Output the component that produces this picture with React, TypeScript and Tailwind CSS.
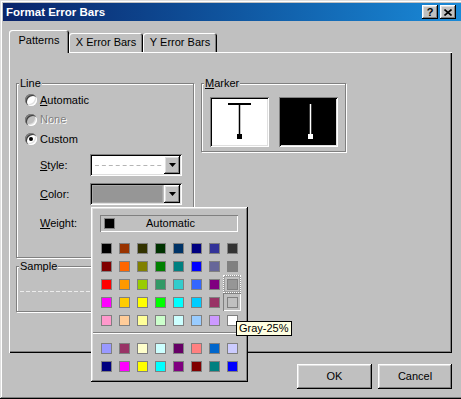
import type { ReactNode } from "react"

const raised =
  "shadow-[inset_-1px_-1px_0_0_#000,inset_1px_1px_0_0_#fff,inset_-2px_-2px_0_0_#808080,inset_2px_2px_0_0_#dfdfdf]"
const sunken =
  "shadow-[inset_1px_1px_0_0_#808080,inset_-1px_-1px_0_0_#fff,inset_2px_2px_0_0_#000,inset_-2px_-2px_0_0_#dfdfdf]"
const etched = "border border-[#808080] shadow-[inset_1px_1px_0_0_#fff,1px_1px_0_0_#fff]"

const standardColors = [
  ["#000000", "#993300", "#333300", "#003300", "#003366", "#000080", "#333399", "#333333"],
  ["#800000", "#ff6600", "#808000", "#008000", "#008080", "#0000ff", "#666699", "#808080"],
  ["#ff0000", "#ff9900", "#99cc00", "#339966", "#33cccc", "#3366ff", "#800080", "#969696"],
  ["#ff00ff", "#ffcc00", "#ffff00", "#00ff00", "#00ffff", "#00ccff", "#993366", "#c0c0c0"],
  ["#ff99cc", "#ffcc99", "#ffff99", "#ccffcc", "#ccffff", "#99ccff", "#cc99ff", "#ffffff"],
]

const chartColors = [
  ["#9999ff", "#993366", "#ffffcc", "#ccffff", "#660066", "#ff8080", "#0066cc", "#ccccff"],
  ["#000080", "#ff00ff", "#ffff00", "#00ffff", "#800080", "#800000", "#008080", "#0000ff"],
]

function Radio({ checked, disabled }: { checked?: boolean; disabled?: boolean }) {
  return (
    <span
      className={`flex items-center justify-center w-[12px] h-[12px] rounded-full shadow-[inset_1px_1px_0_0_#808080,inset_2px_2px_0_0_#404040,inset_-1px_-1px_0_0_#fff,inset_-2px_-2px_0_0_#dfdfdf] ${
        disabled ? "bg-[#c0c0c0]" : "bg-white"
      }`}
    >
      {checked && <span className="w-[4px] h-[4px] rounded-full bg-black" />}
    </span>
  )
}

function Arrow() {
  return (
    <span className={`flex items-center justify-center w-[16px] h-[18px] bg-[#c0c0c0] ${raised}`}>
      <svg width="7" height="4" viewBox="0 0 7 4">
        <polygon points="0,0 7,0 3.5,4" fill="#000" />
      </svg>
    </span>
  )
}

function Group({ label, className, children }: { label: ReactNode; className: string; children?: ReactNode }) {
  return (
    <div className={`relative ${etched} ${className}`}>
      <span className="absolute -top-[7px] left-[2px] px-[1px] bg-[#c0c0c0]">{label}</span>
      {children}
    </div>
  )
}

function Swatch({ color, frame }: { color: string; frame?: "selected" | "hover" }) {
  const frameClass =
    frame === "selected"
      ? "outline outline-1 outline-dotted outline-white -outline-offset-1 shadow-[inset_0_0_0_2px_#a0a0a0]"
      : frame === "hover"
      ? "shadow-[inset_1px_1px_0_0_#808080,inset_-1px_-1px_0_0_#fff]"
      : ""
  return (
    <div className={`flex items-center justify-center w-[18px] h-[18px] ${frameClass}`}>
      <div className="w-[11px] h-[11px] border border-[#808080]" style={{ backgroundColor: color }} />
    </div>
  )
}

function Button({ children, w }: { children: ReactNode; w: string }) {
  return (
    <div className={`flex items-center justify-center h-[25px] bg-[#c0c0c0] ${raised} ${w}`}>{children}</div>
  )
}

export default function App() {
  return (
    <div className="relative w-[461px] h-[399px] overflow-hidden bg-[#c0c0c0] pt-[3px] pl-[3px] font-['Liberation_Sans',Arial,sans-serif] text-[11px] leading-[13px] text-black shadow-[inset_0_-1px_0_0_#000,inset_1px_1px_0_0_#dfdfdf,inset_0_-2px_0_0_#808080,inset_2px_2px_0_0_#fff]">
      {/* title bar */}
      <div className="flex items-center h-[18px] pl-[3px] pr-[5px] bg-linear-to-r from-[#0a246a] to-[#1a8ad8]">
        <span className="flex-1 text-white font-bold text-[11.5px]">Format Error Bars</span>
        <div className="flex gap-[2px]">
          <div className={`flex items-center justify-center w-[16px] h-[14px] bg-[#c0c0c0] ${raised}`}>
            <span className="font-bold text-[11px] leading-[11px]">?</span>
          </div>
          <div className={`flex items-center justify-center w-[16px] h-[14px] bg-[#c0c0c0] ${raised}`}>
            <svg width="8" height="7" viewBox="0 0 8 7">
              <path d="M0.5 0.5 L7.5 6.5 M7.5 0.5 L0.5 6.5" stroke="#000" strokeWidth="1.6" />
            </svg>
          </div>
        </div>
      </div>

      {/* tabs */}
      <div className="flex items-end h-[22px] mt-[9px] ml-[6px]">
        <div className="relative z-10 -mb-px flex items-center justify-center w-[60px] h-[23px] pb-[2px] bg-[#c0c0c0] rounded-t-[3px] shadow-[inset_1px_1px_0_0_#fff,inset_-1px_0_0_0_#000,inset_-2px_0_0_0_#808080]">
          Patterns
        </div>
        <div className="flex items-center justify-center w-[74px] h-[19px] rounded-t-[3px] shadow-[inset_1px_1px_0_0_#fff,inset_-1px_0_0_0_#000,inset_-2px_0_0_0_#808080]">
          X Error Bars
        </div>
        <div className="flex items-center justify-center w-[74px] h-[19px] rounded-t-[3px] shadow-[inset_1px_1px_0_0_#fff,inset_-1px_0_0_0_#000,inset_-2px_0_0_0_#808080]">
          Y Error Bars
        </div>
      </div>

      {/* tab panel */}
      <div className="ml-[6px] w-[443px] h-[301px] pl-[7px] pt-[31px] flex shadow-[inset_1px_1px_0_0_#fff,inset_-1px_-1px_0_0_#000,inset_-2px_-2px_0_0_#808080]">
        <div className="flex flex-col">
          <Group label="Line" className="w-[178px] h-[175px] pt-[6px] pl-[8px]">
            <div className="flex items-center h-[20px]">
              <Radio />
              <span className="ml-[3px]">
                <u>A</u>utomatic
              </span>
            </div>
            <div className="flex items-center h-[19px]">
              <Radio disabled />
              <span className="ml-[3px] text-[#808080] [text-shadow:1px_1px_0_#fff]">None</span>
            </div>
            <div className="flex items-center h-[20px]">
              <Radio checked />
              <span className="ml-[3px]">Custom</span>
            </div>

            <div className="flex items-center h-[22px] mt-[5px]">
              <span className="ml-[15px] w-[50px]">
                <u>S</u>tyle:
              </span>
              <div className={`flex items-center justify-between w-[92px] h-[22px] bg-white p-[2px] ${sunken}`}>
                <svg width="70" height="3" viewBox="0 0 70 3" className="ml-[3px]">
                  <line x1="0" y1="1.5" x2="70" y2="1.5" stroke="#b4b4b4" strokeWidth="1" strokeDasharray="4 3" />
                </svg>
                <Arrow />
              </div>
            </div>

            <div className="flex items-center h-[22px] mt-[7px]">
              <span className="ml-[15px] w-[50px]">
                <u>C</u>olor:
              </span>
              <div className={`flex items-center justify-between w-[92px] h-[22px] bg-[#c0c0c0] p-[2px] ${sunken}`}>
                <div className="w-[71px] h-[18px] bg-[#969696] border border-[#a8a8a8]" />
                <Arrow />
              </div>
            </div>

            <div className="flex items-center h-[22px] mt-[7px]">
              <span className="ml-[15px] w-[50px]">
                <u>W</u>eight:
              </span>
            </div>
          </Group>

          <Group label="Sample" className="w-[178px] h-[46px] mt-[8px] pt-[23px] pl-[3px]">
            <svg width="160" height="3" viewBox="0 0 160 3">
              <line x1="0" y1="1.5" x2="160" y2="1.5" stroke="#ececec" strokeWidth="1" strokeDasharray="4 2" />
            </svg>
          </Group>
        </div>

        <Group
          label={
            <>
              <u>M</u>arker
            </>
          }
          className="ml-[7px] w-[145px] h-[69px] pt-[13px] pl-[8px]"
        >
          <div className="flex gap-[10px]">
            <div className={`w-[59px] h-[50px] bg-white ${sunken}`}>
              <svg width="59" height="50" viewBox="0 0 59 50">
                <line x1="18" y1="7" x2="41" y2="7" stroke="#000" strokeWidth="2" />
                <line x1="29.5" y1="7" x2="29.5" y2="39" stroke="#000" strokeWidth="1.5" />
                <rect x="27" y="37" width="5" height="5" fill="#000" />
              </svg>
            </div>
            <div className={`w-[59px] h-[50px] bg-black ${sunken}`}>
              <svg width="59" height="50" viewBox="0 0 59 50">
                <line x1="31.5" y1="7" x2="31.5" y2="39" stroke="#fff" strokeWidth="1.5" />
                <rect x="29" y="37" width="5" height="5" fill="#fff" />
              </svg>
            </div>
          </div>
        </Group>
      </div>

      {/* dialog buttons */}
      <div className="flex justify-end gap-[6px] mt-[11px] pr-[9px]">
        <Button w="w-[75px]">OK</Button>
        <Button w="w-[74px]">Cancel</Button>
      </div>

      {/* colour palette drop-down */}
      <div className={`absolute left-[91px] top-[207px] w-[157px] h-[175px] bg-[#c0c0c0] ${raised}`}>
        <div className="ml-[9px] mt-[8px] w-[138px] h-[17px] flex items-center shadow-[inset_1px_1px_0_0_#808080,inset_-1px_-1px_0_0_#fff]">
          <div className="ml-[4px] w-[11px] h-[11px] bg-black border border-[#808080]" />
          <span className="flex-1 text-center pr-[12px]">Automatic</span>
        </div>
        <div className="ml-[6px] mt-[7px] grid grid-cols-8 w-[144px]">
          {standardColors.map((row, r) =>
            row.map((c, i) => (
              <Swatch
                key={`${r}-${i}`}
                color={c}
                frame={r === 2 && i === 7 ? "selected" : r === 3 && i === 7 ? "hover" : undefined}
              />
            ))
          )}
        </div>
        <div className="ml-[2px] mt-[3px] w-[152px] h-[2px] border-t border-[#808080] border-b border-b-white" />
        <div className="ml-[6px] mt-[5px] grid grid-cols-8 w-[144px]">
          {chartColors.map((row, r) => row.map((c, i) => <Swatch key={`c${r}-${i}`} color={c} />))}
        </div>
      </div>

      {/* tooltip */}
      <div className="absolute left-[236px] top-[321px] h-[15px] px-[2px] flex items-center bg-[#ffffe1] border border-black">
        Gray-25%
      </div>
    </div>
  )
}
